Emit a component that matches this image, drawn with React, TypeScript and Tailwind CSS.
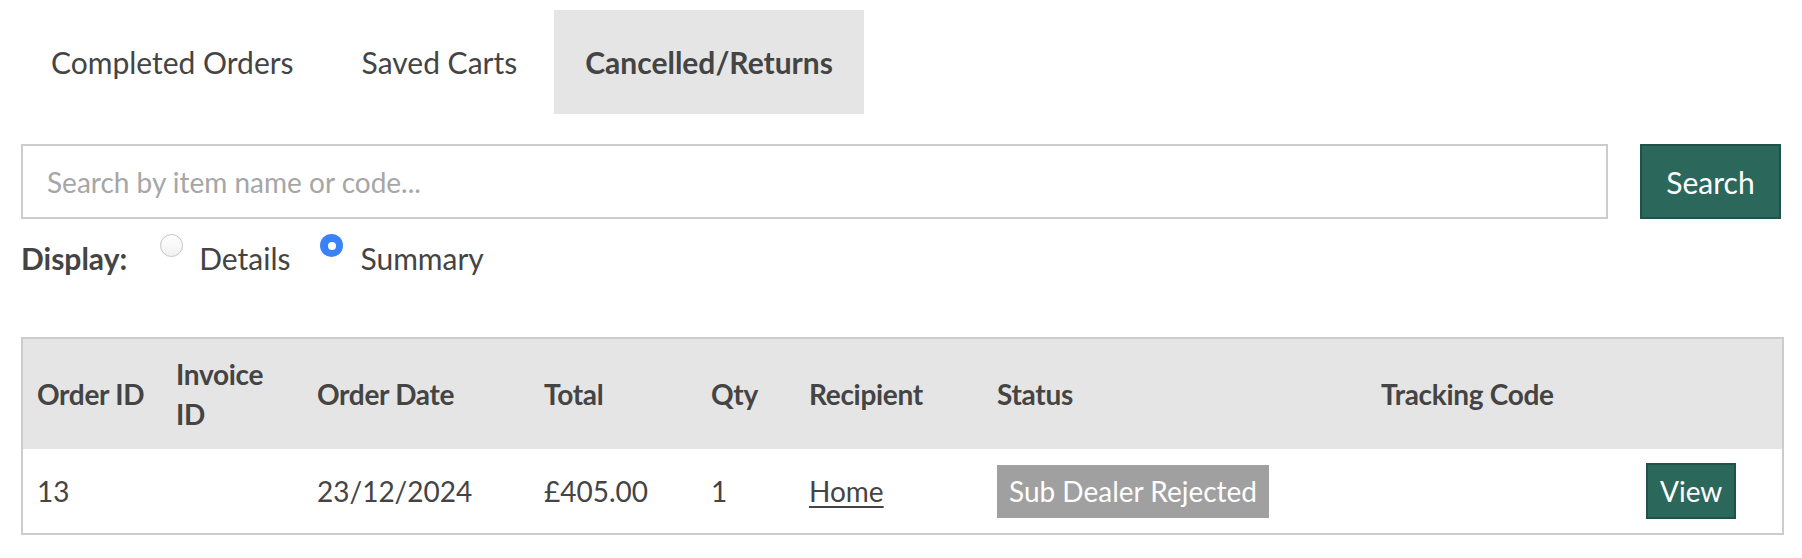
import React from "react";

const tabs = ["Completed Orders", "Saved Carts", "Cancelled/Returns"];

export default function App() {
  const active = "Cancelled/Returns";
  return (
    <div className="w-[1802px] h-[558px] bg-white px-[21px] pt-[10px] text-[28px] leading-[40px] text-[#444]" style={{ fontFamily: "Lato, 'Open Sans', sans-serif" }}>
      <div className="flex gap-[6px] -ml-[1px] text-[30px]">
        {tabs.map((t) => (
          <div
            key={t}
            className={
              "h-[104px] px-[31px] flex items-center " +
              (t === active ? "bg-[#e5e5e5] font-bold" : "")
            }
          >
            {t}
          </div>
        ))}
      </div>

      <div className="flex mt-[30px] gap-[32px]">
        <input
          className="flex-1 h-[75px] border-2 border-[#cccccc] px-[24px] text-[28px] text-[#444] placeholder:text-[#a6a6a6] outline-none"
          placeholder="Search by item name or code..."
        />
        <button className="w-[141px] h-[75px] bg-[#2c675c] border-2 border-[#1f5248] text-white text-[30px]">
          Search
        </button>
      </div>

      <div className="flex items-start mt-[19px] text-[30px]">
        <span className="font-bold">Display:</span>
        <span className="ml-[33px] -mt-[4px] w-[23px] h-[23px] rounded-full border border-[#c4c4c4] bg-gradient-to-b from-white to-[#f1f1f1]" />
        <span className="ml-[16px]">Details</span>
        <span className="ml-[30px] -mt-[4px] w-[23px] h-[23px] rounded-full bg-[#3a82f7] flex items-center justify-center">
          <span className="w-[8px] h-[8px] rounded-full bg-white" />
        </span>
        <span className="ml-[17px]">Summary</span>
      </div>

      <table className="mt-[59px] w-full table-fixed border-collapse border-2 border-[#cccccc]">
        <colgroup>
          <col className="w-[140px]" />
          <col className="w-[141px]" />
          <col className="w-[227px]" />
          <col className="w-[167px]" />
          <col className="w-[98px]" />
          <col className="w-[188px]" />
          <col className="w-[384px]" />
          <col className="w-[265px]" />
          <col className="w-[151px]" />
        </colgroup>
        <thead>
          <tr className="bg-[#e5e5e5] h-[111px]">
            {["Order ID", "Invoice ID", "Order Date", "Total", "Qty", "Recipient", "Status", "Tracking Code", ""].map((h, i) => (
              <th
                key={i}
                className={
                  "pl-[14px] pr-[16px] text-left align-middle font-bold tracking-[-0.3px] " +
                  (i === 1 ? "" : "whitespace-nowrap")
                }
              >
                {h}
              </th>
            ))}
          </tr>
        </thead>
        <tbody>
          <tr className="h-[85px]">
            <td className="pl-[14px] pr-[16px] align-middle">13</td>
            <td className="pl-[14px] pr-[16px] align-middle"></td>
            <td className="pl-[14px] pr-[16px] align-middle">23/12/2024</td>
            <td className="pl-[14px] pr-[16px] align-middle">£405.00</td>
            <td className="pl-[14px] pr-[16px] align-middle">1</td>
            <td className="pl-[14px] pr-[16px] align-middle">
              <span className="underline underline-offset-[4px] decoration-[2px]">Home</span>
            </td>
            <td className="pl-[14px] pr-[16px] align-middle">
              <span className="inline-block bg-[#a0a0a0] text-white px-[12px] py-[6px] leading-[41px]">
                Sub Dealer Rejected
              </span>
            </td>
            <td className="pl-[14px] pr-[16px] align-middle"></td>
            <td className="pl-[14px] pr-[16px] align-middle">
              <button className="h-[56px] px-[12px] bg-[#2c675c] border-2 border-[#1f5248] text-white text-[28px]">
                View
              </button>
            </td>
          </tr>
        </tbody>
      </table>
    </div>
  );
}
